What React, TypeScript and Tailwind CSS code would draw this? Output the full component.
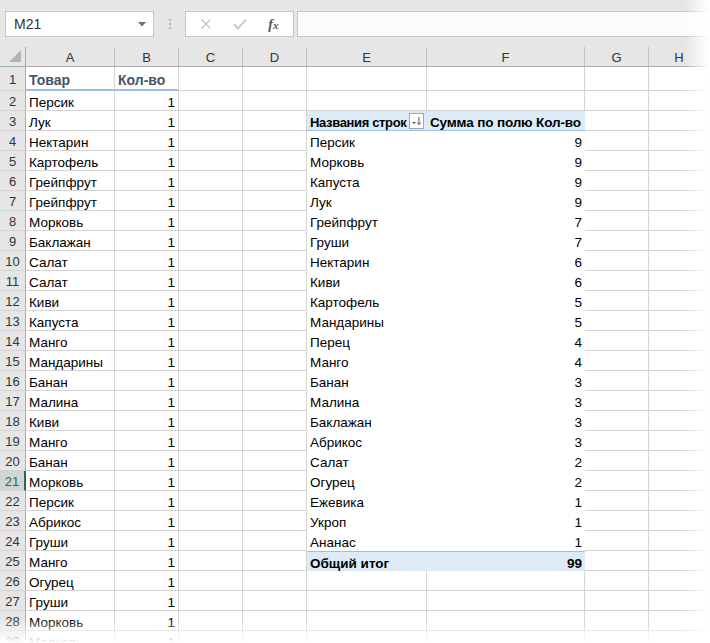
import React from 'react';

const listA = [
  'Персик', 'Лук', 'Нектарин', 'Картофель', 'Грейпфрут', 'Грейпфрут', 'Морковь',
  'Баклажан', 'Салат', 'Салат', 'Киви', 'Капуста', 'Манго', 'Мандарины', 'Банан',
  'Малина', 'Киви', 'Манго', 'Банан', 'Морковь', 'Персик', 'Абрикос', 'Груши',
  'Манго', 'Огурец', 'Груши', 'Морковь', 'Морковь',
];

const pivot: [string, number][] = [
  ['Персик', 9], ['Морковь', 9], ['Капуста', 9], ['Лук', 9], ['Грейпфрут', 7],
  ['Груши', 7], ['Нектарин', 6], ['Киви', 6], ['Картофель', 5], ['Мандарины', 5],
  ['Перец', 4], ['Манго', 4], ['Банан', 3], ['Малина', 3], ['Баклажан', 3],
  ['Абрикос', 3], ['Салат', 2], ['Огурец', 2], ['Ежевика', 1], ['Укроп', 1], ['Ананас', 1],
];

const cols = ['A', 'B', 'C', 'D', 'E', 'F', 'G', 'H'];
const rows = Array.from({ length: 29 }, (_, i) => i + 1);

const cell = 'border-r border-b border-[#d4d4d4] px-[3px] flex items-center pt-[4px] leading-[16px] whitespace-nowrap overflow-hidden';
const pv = 'px-[3px] pt-[4px] leading-[16px] flex items-center whitespace-nowrap';

const FilterButton = () => (
  <span className="w-[15px] h-[16px] border border-[#a6a6a6] bg-white flex items-center justify-center shrink-0 -mt-[3px]">
    <svg width="11" height="10" viewBox="0 0 11 10">
      <path d="M1 6 L5 6 L3 8 Z" fill="#555" />
      <path d="M8 1 L8 8 M6.3 6.5 L8 8.6 L9.7 6.5" stroke="#555" strokeWidth="1" fill="none" />
    </svg>
  </span>
);

function renderRow(r: number) {
  const h = r === 1 ? 'h-[24px]' : 'h-[20px]';
  const sel = r === 21;
  const out: React.ReactNode[] = [];

  out.push(
    <div
      key={`rh${r}`}
      className={`${h} flex items-center justify-center pt-[3px] leading-[16px] text-[13px] border-b border-[#d4d4d4] ${
        sel ? 'bg-[#d3d3d3] text-[#217346] border-r-2 border-r-[#217346]' : 'bg-[#e6e6e6] text-[#333] border-r border-r-[#ababab]'
      }`}
    >
      {r}
    </div>
  );

  // A, B
  if (r === 1) {
    out.push(
      <div key="a1" className={`${h} ${cell} border-b-2 border-b-[#9bc2e6] font-bold text-[14px] text-[#44546a]`}>Товар</div>,
      <div key="b1" className={`${h} ${cell} border-b-2 border-b-[#9bc2e6] font-bold text-[14px] text-[#44546a]`}>Кол-во</div>
    );
  } else {
    out.push(
      <div key={`a${r}`} className={`${h} ${cell}`}>{listA[r - 2]}</div>,
      <div key={`b${r}`} className={`${h} ${cell} justify-end`}>1</div>
    );
  }

  out.push(
    <div key={`c${r}`} className={`${h} ${cell}`} />,
    <div key={`d${r}`} className={`${h} ${cell}`} />
  );

  // E, F — pivot
  if (r === 3) {
    out.push(
      <div key="e3" className={`${h} ${pv} bg-[#ddebf7] border-b border-[#9bc2e6] justify-between font-bold`}>
        <span className="text-[13px] tracking-[-0.35px]">Названия строк</span>
        <FilterButton />
      </div>,
      <div key="f3" className={`${h} ${pv} bg-[#ddebf7] border-b border-[#9bc2e6] font-bold tracking-[-0.15px]`}>
        Сумма по полю Кол-во
      </div>
    );
  } else if (r >= 4 && r <= 24) {
    const [name, n] = pivot[r - 4];
    out.push(
      <div key={`e${r}`} className={`${h} ${pv} bg-white`}>{name}</div>,
      <div key={`f${r}`} className={`${h} ${pv} bg-white justify-end`}>{n}</div>
    );
  } else if (r === 25) {
    out.push(
      <div key="e25" className={`${h} ${pv} bg-[#ddebf7] border-t border-[#9bc2e6] font-bold`}>Общий итог</div>,
      <div key="f25" className={`${h} ${pv} bg-[#ddebf7] border-t border-[#9bc2e6] justify-end font-bold`}>99</div>
    );
  } else {
    out.push(
      <div key={`e${r}`} className={`${h} ${cell}`} />,
      <div key={`f${r}`} className={`${h} ${cell}`} />
    );
  }

  out.push(
    <div key={`g${r}`} className={`${h} ${cell}`} />,
    <div key={`hh${r}`} className={`${h} ${cell}`} />
  );

  return out;
}

export default function App() {
  return (
    <div
      className="relative w-[710px] h-[643px] overflow-hidden bg-white text-black text-[13.5px]"
      style={{ fontFamily: '"Liberation Sans", Arial, sans-serif' }}
    >
      {/* formula bar */}
      <div className="h-[47px] bg-[#e6e6e6] flex items-start pt-[11px]">
        <div className="ml-[5px] w-[149px] h-[26px] bg-white border border-[#c6c6c6] flex items-center justify-between pl-[8px] pr-[7px] text-[14px] text-[#333]">
          <span>M21</span>
          <svg width="8" height="5" viewBox="0 0 8 5">
            <path d="M0 0 L8 0 L4 4.5 Z" fill="#707070" />
          </svg>
        </div>
        <div className="w-[31px] h-[26px] flex flex-col items-center justify-center gap-[2px]">
          <span className="w-[2px] h-[2px] bg-[#b4b4b4]" />
          <span className="w-[2px] h-[2px] bg-[#b4b4b4]" />
          <span className="w-[2px] h-[2px] bg-[#b4b4b4]" />
        </div>
        <div className="w-[109px] h-[26px] bg-white border border-[#c6c6c6] flex items-center justify-around px-[4px]">
          <svg width="12" height="12" viewBox="0 0 12 12">
            <path d="M1.5 1.5 L10.5 10.5 M10.5 1.5 L1.5 10.5" stroke="#c4c4c4" strokeWidth="1.4" />
          </svg>
          <svg width="14" height="12" viewBox="0 0 14 12">
            <path d="M1 6.5 L5 10.5 L13 1.5" stroke="#c4c4c4" strokeWidth="1.8" fill="none" />
          </svg>
          <span className="italic text-[14px] text-[#555] font-bold" style={{ fontFamily: '"Liberation Serif", serif' }}>
            f<span className="text-[11px]">x</span>
          </span>
        </div>
        <div className="ml-[3px] flex-1 h-[26px] bg-[#fcfcfc] border-y border-l border-[#c6c6c6]" />
      </div>

      {/* sheet grid */}
      <div className="grid grid-cols-[26px_89px_64px_64px_64px_120px_158px_64px_1fr]">
        <div className="h-[20px] bg-[#e6e6e6] border-r border-b border-[#ababab] flex items-end justify-end pr-[4px] pb-[4px]">
          <svg width="12" height="12" viewBox="0 0 12 12">
            <path d="M12 0 L12 12 L0 12 Z" fill="#b4b4b4" />
          </svg>
        </div>
        {cols.map((c) => (
          <div
            key={c}
            className="h-[20px] bg-[#e6e6e6] border-b border-b-[#ababab] border-r border-r-[#c0c0c0] flex items-center justify-center pt-[2px] text-[13px] text-[#333]"
          >
            {c}
          </div>
        ))}
        {rows.map((r) => renderRow(r))}
      </div>

      {/* edge fades */}
      <div className="absolute top-0 right-0 h-full w-[26px] bg-gradient-to-r from-white/0 to-white pointer-events-none" />
      <div className="absolute bottom-0 left-0 w-full h-[24px] bg-gradient-to-b from-white/0 to-white pointer-events-none" />
    </div>
  );
}
